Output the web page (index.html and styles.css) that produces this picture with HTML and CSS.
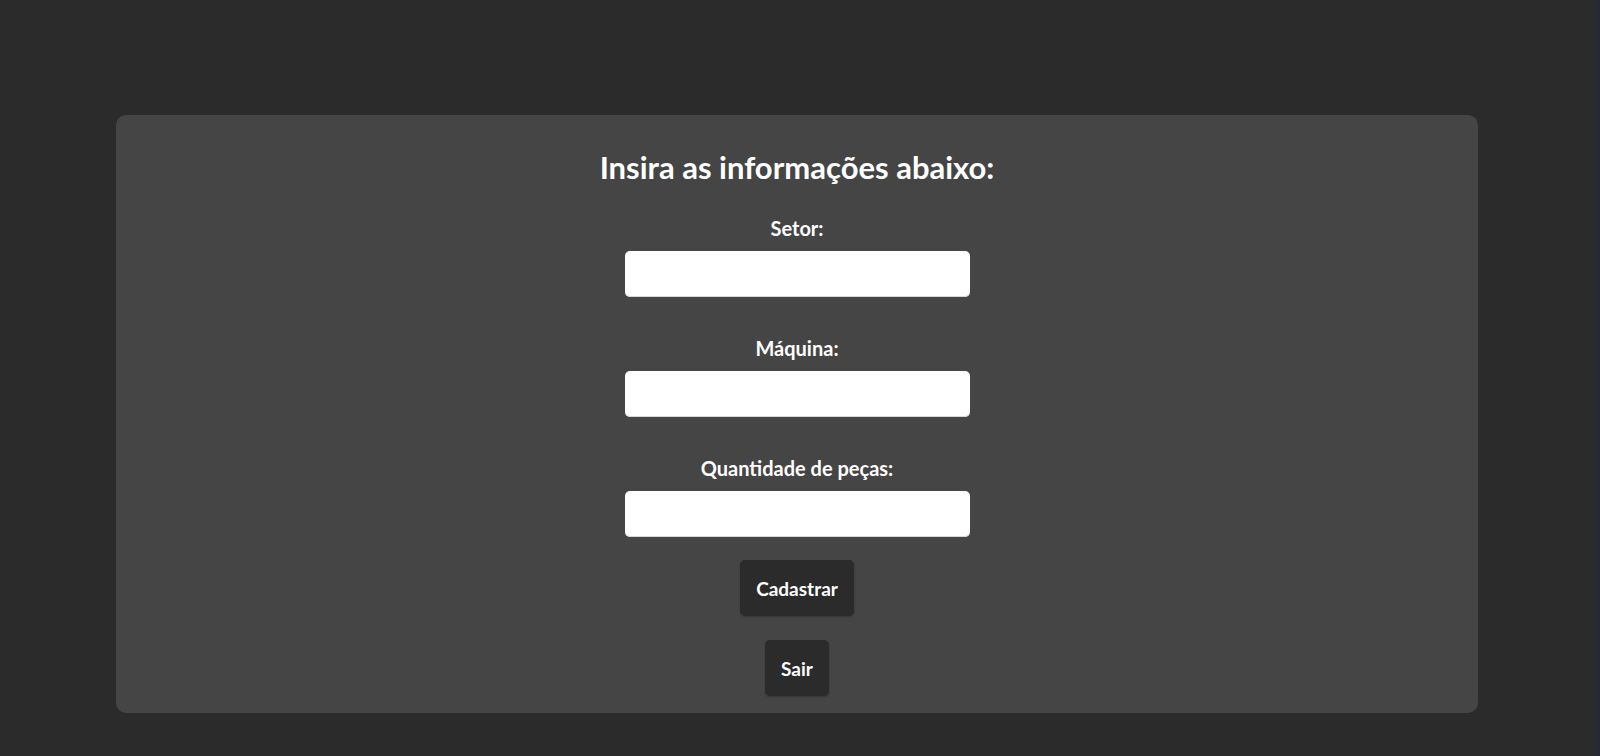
FILE: index.html
```html
<!DOCTYPE html>
<html lang="pt-BR">
<head>
<meta charset="utf-8">
<title>Cadastro</title>
<link rel="stylesheet" href="styles.css">
</head>
<body>
<div class="page">
  <main class="card">
    <h1 class="title">Insira as informações abaixo:</h1>
    <form class="form">
      <div class="field">
        <label class="label" for="setor">Setor:</label>
        <input class="input" id="setor" type="text">
      </div>
      <div class="field">
        <label class="label" for="maquina">Máquina:</label>
        <input class="input" id="maquina" type="text">
      </div>
      <div class="field">
        <label class="label" for="qtd">Quantidade de peças:</label>
        <input class="input" id="qtd" type="text">
      </div>
      <button class="btn btn-first" type="button">Cadastrar</button>
      <button class="btn btn-second" type="button">Sair</button>
    </form>
  </main>
</div>
</body>
</html>
```

FILE: styles.css
```css
html, body {
  margin: 0;
  padding: 0;
  height: 100%;
  background: #2b2b2b;
}
body {
  font-family: Lato, "Open Sans", sans-serif;
  color: #ffffff;
}
.page {
  height: 100%;
  box-sizing: border-box;
  border-right: 6px solid #272a33;
  padding: 115px 116px 0;
}
.card {
  background: #454545;
  border-radius: 10px;
  padding: 34px 0 17px;
  display: flex;
  flex-direction: column;
  align-items: center;
}
.title {
  margin: 0;
  font-size: 31px;
  line-height: 36px;
  font-weight: 700;
}
.form {
  margin-top: 32px;
  display: flex;
  flex-direction: column;
  align-items: center;
}
.field {
  display: flex;
  flex-direction: column;
  align-items: center;
  margin-bottom: 40px;
}
.field:last-of-type {
  margin-bottom: 23px;
}
.label {
  font-size: 20px;
  line-height: 22px;
  font-weight: 700;
  margin-bottom: 12px;
}
.input {
  width: 345px;
  height: 46px;
  box-sizing: border-box;
  border: none;
  border-radius: 5px;
  background: #ffffff;
  outline: none;
  box-shadow: inset 0 -1px 0 #d8d8d8;
}
.btn {
  height: 56px;
  padding: 0 16px;
  border: none;
  border-radius: 5px;
  background: #2b2b2b;
  color: #ffffff;
  font-family: inherit;
  font-size: 19px;
  font-weight: 700;
  box-shadow: 0 1px 2px rgba(0,0,0,0.25);
}
.btn-first {
  margin-bottom: 24px;
}
```
